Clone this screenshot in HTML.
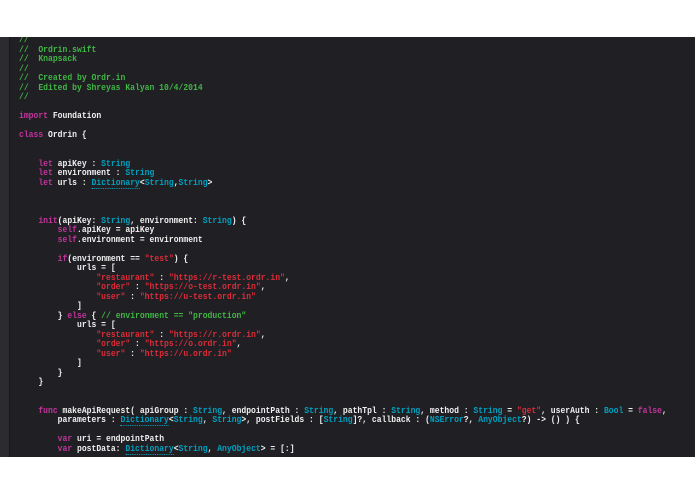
<!DOCTYPE html>
<html><head><meta charset="utf-8"><style>
html,body{margin:0;padding:0;background:#fff;width:695px;height:494px;overflow:hidden}
#ed{position:absolute;left:0;top:37px;width:695px;height:420px;background:#1f1f24;overflow:hidden}
#gut{position:absolute;left:0;top:0;width:9px;height:420px;background:#2b2b30}
#gut2{position:absolute;left:9px;top:0;width:1px;height:420px;background:#18181b}
pre{position:absolute;left:19px;top:-1px;margin:0;font-family:"Liberation Mono",monospace;font-size:9px;line-height:9.5px;color:#f0f0f0;font-weight:bold;transform:scaleX(0.895);transform-origin:0 0}
.c{color:#41b645}.k{color:#c2349b}.t{color:#00a0be}.s{color:#db2c38}
.u{border-bottom:1px dotted #00a0be}
</style></head><body>
<div id="ed"><div id="gut"></div><div id="gut2"></div>
<pre><span class="c">//
//  Ordrin.swift
//  Knapsack
//
//  Created by Ordr.in
//  Edited by Shreyas Kalyan 10/4/2014
//</span>

<span class="k">import</span> Foundation

<span class="k">class</span> Ordrin {


    <span class="k">let</span> apiKey : <span class="t">String</span>
    <span class="k">let</span> environment : <span class="t">String</span>
    <span class="k">let</span> urls : <span class="t u">Dictionary</span>&lt;<span class="t">String</span>,<span class="t">String</span>&gt;



    <span class="k">init</span>(apiKey: <span class="t">String</span>, environment: <span class="t">String</span>) {
        <span class="k">self</span>.apiKey = apiKey
        <span class="k">self</span>.environment = environment

        <span class="k">if</span>(environment == <span class="s">"test"</span>) {
            urls = [
                <span class="s">"restaurant"</span> : <span class="s">"https://r-test.ordr.in"</span>,
                <span class="s">"order"</span> : <span class="s">"https://o-test.ordr.in"</span>,
                <span class="s">"user"</span> : <span class="s">"https://u-test.ordr.in"</span>
            ]
        } <span class="k">else</span> { <span class="c">// environment == "production"</span>
            urls = [
                <span class="s">"restaurant"</span> : <span class="s">"https://r.ordr.in"</span>,
                <span class="s">"order"</span> : <span class="s">"https://o.ordr.in"</span>,
                <span class="s">"user"</span> : <span class="s">"https://u.ordr.in"</span>
            ]
        }
    }


    <span class="k">func</span> makeApiRequest( apiGroup : <span class="t">String</span>, endpointPath : <span class="t">String</span>, pathTpl : <span class="t">String</span>, method : <span class="t">String</span> = <span class="s">"get"</span>, userAuth : <span class="t">Bool</span> = <span class="k">false</span>,
        parameters : <span class="t u">Dictionary</span>&lt;<span class="t">String</span>, <span class="t">String</span>&gt;, postFields : [<span class="t">String</span>]?, callback : (<span class="t">NSError</span>?, <span class="t">AnyObject</span>?) -&gt; () ) {

        <span class="k">var</span> uri = endpointPath
        <span class="k">var</span> postData: <span class="t u">Dictionary</span>&lt;<span class="t">String</span>, <span class="t">AnyObject</span>&gt; = [:]
</pre></div>
</body></html>
